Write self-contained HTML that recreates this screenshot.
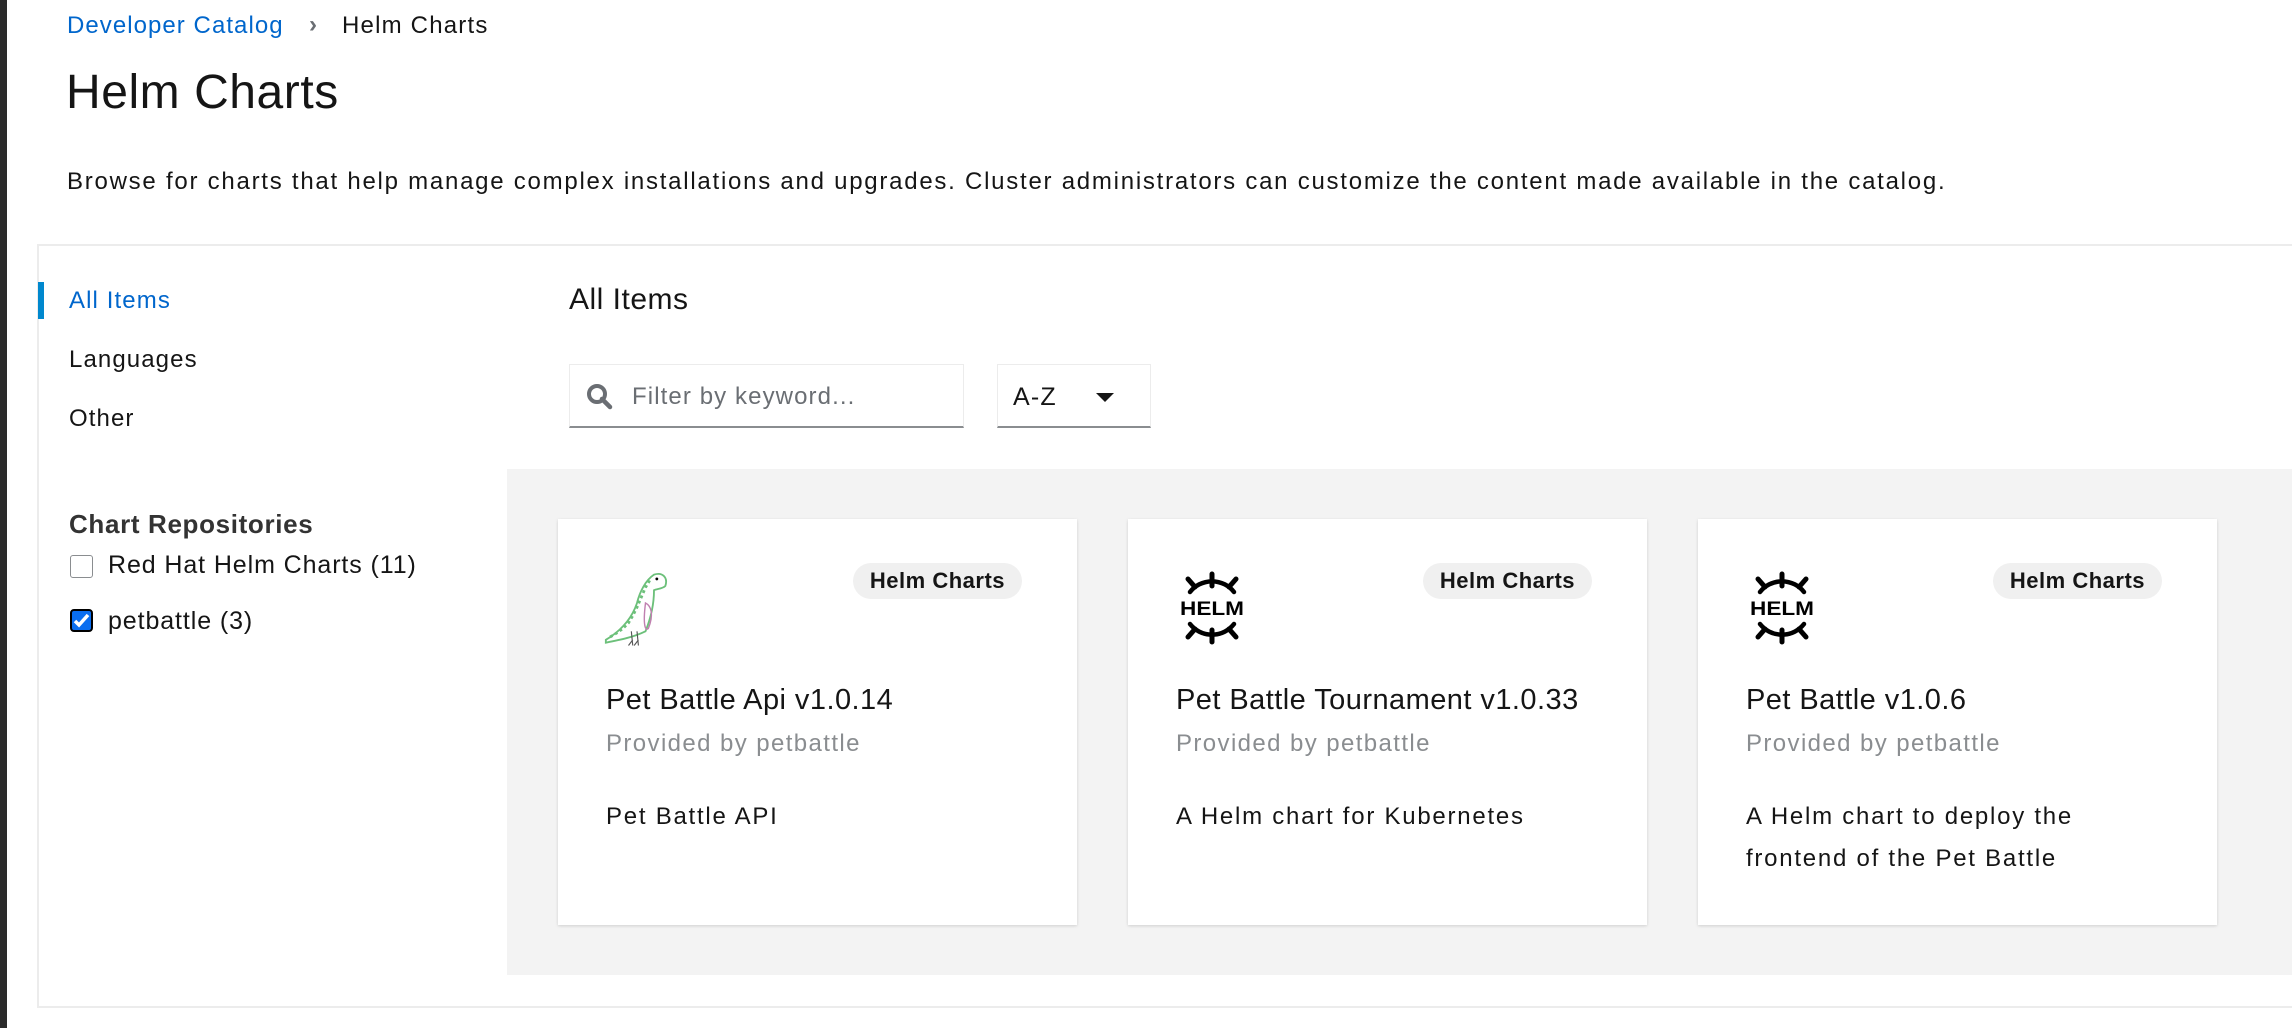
<!DOCTYPE html>
<html><head><meta charset="utf-8"><style>
*{box-sizing:border-box;margin:0;padding:0}
body{width:2292px;height:1028px;background:#fff;font-family:"Liberation Sans",sans-serif;color:#151515;position:relative;overflow:hidden;letter-spacing:1.3px}
.a{position:absolute;white-space:nowrap}
.strip{left:0;top:0;width:7px;height:1028px;background:#2b2b2b}
.box{left:37px;top:244px;width:2300px;height:764px;border:2px solid #ececec;border-right:none}
.gray{left:507px;top:469px;width:1800px;height:506px;background:#f3f3f3}
.card{position:absolute;top:519px;width:519px;height:406px;background:#fff;box-shadow:0 1px 3px rgba(0,0,0,.15)}
.badge{position:absolute;right:55px;top:44px;height:36px;padding:0 17px;border-radius:18px;background:#f0f0f0;font-size:22px;font-weight:bold;line-height:36px;color:#151515;letter-spacing:0.5px}
.t{position:absolute;left:48px;top:165px;font-size:29px;letter-spacing:0.45px}
.p{position:absolute;left:48px;top:211px;font-size:24px;color:#8a8d90;letter-spacing:1.4px}
.d{position:absolute;left:48px;top:277px;font-size:24px;line-height:42px;width:430px;white-space:normal;letter-spacing:1.75px}
.cb{position:absolute;width:23px;height:23px;border:1px solid #8a8d90;border-radius:3px;background:#fff}
</style></head><body>
<div class="a strip"></div>
<div class="a" style="left:67px;top:12px;font-size:24px;color:#0066cc;letter-spacing:1.05px">Developer Catalog</div>
<div class="a" style="left:309px;top:11px;font-size:24px;color:#6a6e73;font-weight:bold">›</div>
<div class="a" style="left:342px;top:12px;font-size:24px;letter-spacing:1.2px">Helm Charts</div>
<div class="a" style="left:66px;top:65px;font-size:48px;letter-spacing:0.55px">Helm Charts</div>
<div class="a" style="left:67px;top:168px;font-size:24px;letter-spacing:1.75px">Browse for charts that help manage complex installations and upgrades. Cluster administrators can customize the content made available in the catalog.</div>
<div class="a box"></div>
<div class="a" style="left:38px;top:282px;width:6px;height:37px;background:#0088ce"></div>
<div class="a" style="left:69px;top:287px;font-size:24px;color:#0066cc;letter-spacing:1.1px">All Items</div>
<div class="a" style="left:69px;top:346px;font-size:24px;letter-spacing:1.1px">Languages</div>
<div class="a" style="left:69px;top:405px;font-size:24px;letter-spacing:1.1px">Other</div>
<div class="a" style="left:69px;top:509px;font-size:26px;font-weight:bold;color:#333;letter-spacing:0.65px">Chart Repositories</div>
<div class="cb" style="left:70px;top:555px"></div>
<div class="a" style="left:108px;top:551px;font-size:25px;letter-spacing:0.9px">Red Hat Helm Charts (11)</div>
<div class="cb" style="left:70px;top:609px;background:#0a6ef0;border:2px solid #000;border-radius:4px"><svg width="19" height="19" viewBox="0 0 19 19" style="position:absolute;left:0;top:0"><path d="M3 10l4 4 9-10" stroke="#fff" stroke-width="3.5" fill="none"/></svg></div>
<div class="a" style="left:108px;top:607px;font-size:25px;letter-spacing:0.9px">petbattle (3)</div>
<div class="a" style="left:569px;top:283px;font-size:30px;letter-spacing:0.5px">All Items</div>
<div class="a" style="left:569px;top:364px;width:395px;height:64px;border:1px solid #ececec;border-bottom:2px solid #8a8d90">
<svg class="a" style="left:16px;top:18px" width="28" height="28" viewBox="0 0 28 28"><circle cx="11" cy="11" r="8" stroke="#6a6e73" stroke-width="4" fill="none"/><path d="M16 16l8 8" stroke="#6a6e73" stroke-width="4.5" stroke-linecap="round"/></svg>
<div class="a" style="left:62px;top:18px;font-size:24px;color:#6a6e73;letter-spacing:1.1px">Filter by keyword...</div></div>
<div class="a" style="left:997px;top:364px;width:154px;height:64px;border:1px solid #ececec;border-bottom:2px solid #8a8d90">
<div class="a" style="left:15px;top:18px;font-size:25px;letter-spacing:1.2px">A-Z</div>
<div class="a" style="left:98px;top:28px;width:0;height:0;border-left:9px solid transparent;border-right:9px solid transparent;border-top:9px solid #151515"></div></div>
<div class="a gray"></div>

<div class="card" style="left:558px">
<svg class="a" style="left:45px;top:50px" width="85" height="85" viewBox="0 0 60 60"><path d="M2 50 C12 44 20 36 24 24 C26 16 30 8 36 4 C42 2 46 6 44 12 C42 14 38 14 36 15 C36 24 34 34 30 44 C22 48 12 50 2 52Z" stroke="#6cc07a" stroke-width="1.3" fill="none"/><path d="M5 48 L10 45 L14 42 L18 38 L21 33 L24 27 L27 20 L30 13 L33 8" stroke="#6cc07a" stroke-width="2" stroke-dasharray="2 2" fill="none"/><path d="M30 24 C34 26 36 32 32 42 C30 44 28 40 30 24Z" stroke="#c080b0" fill="none" stroke-width="1"/><path d="M20 44 l1 10 M24 44 l1 10 M18 54 l3 -4 M22 54 l3 -4" stroke="#555" stroke-width=".8"/><circle cx="38" cy="7" r="1" fill="#000"/></svg>
<div class="badge">Helm Charts</div>
<div class="t">Pet Battle Api v1.0.14</div>
<div class="p">Provided by petbattle</div>
<div class="d">Pet Battle API</div></div>

<div class="card" style="left:1128px">
<svg class="a" style="left:48px;top:52px" width="72" height="74" viewBox="0 0 72 74"><g stroke="#000" fill="none" stroke-linecap="round"><path d="M14 21 A28 28 0 0 1 58 21" stroke-width="4.5"/><path d="M14 53 A28 28 0 0 0 58 53" stroke-width="4.5"/><path d="M36 3v12M36 59v12M12 8l7 8M60 8l-7 8M12 66l7-8M60 66l-7-8" stroke-width="5"/></g><text x="36" y="44" text-anchor="middle" font-family="Liberation Sans" font-weight="bold" font-size="19" textLength="64" lengthAdjust="spacingAndGlyphs" letter-spacing="0">HELM</text></svg>
<div class="badge">Helm Charts</div>
<div class="t">Pet Battle Tournament v1.0.33</div>
<div class="p">Provided by petbattle</div>
<div class="d">A Helm chart for Kubernetes</div></div>

<div class="card" style="left:1698px">
<svg class="a" style="left:48px;top:52px" width="72" height="74" viewBox="0 0 72 74"><g stroke="#000" fill="none" stroke-linecap="round"><path d="M14 21 A28 28 0 0 1 58 21" stroke-width="4.5"/><path d="M14 53 A28 28 0 0 0 58 53" stroke-width="4.5"/><path d="M36 3v12M36 59v12M12 8l7 8M60 8l-7 8M12 66l7-8M60 66l-7-8" stroke-width="5"/></g><text x="36" y="44" text-anchor="middle" font-family="Liberation Sans" font-weight="bold" font-size="19" textLength="64" lengthAdjust="spacingAndGlyphs" letter-spacing="0">HELM</text></svg>
<div class="badge">Helm Charts</div>
<div class="t">Pet Battle v1.0.6</div>
<div class="p">Provided by petbattle</div>
<div class="d">A Helm chart to deploy the<br>frontend of the Pet Battle</div></div>
</body></html>
